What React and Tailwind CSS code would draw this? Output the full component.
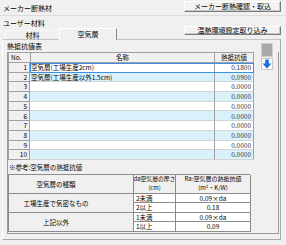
import React from 'react';

const ROWS = [
  { no: 1, name: '空気層(工場生産2cm)', value: '0.1800' },
  { no: 2, name: '空気層(工場生産以外1.5cm)', value: '0.0900' },
  ...Array.from({ length: 8 }, (_, i) => ({ no: i + 3, name: '', value: '0.0000' })),
];

const REF = [
  { kind: '工場生産で気密なもの', rows: [['2未満', '0.09×da'], ['2以上', '0.18']] },
  { kind: '上記以外', rows: [['1未満', '0.09×da'], ['1以上', '0.09']] },
];

function WinButton({ children, className }) {
  return (
    <div
      className={
        'flex items-center justify-center bg-[#f3f3f3] border border-t-white border-l-white border-r-[#7a7a7a] border-b-[#7a7a7a] shadow-[inset_-1px_-1px_0_#c8c8c8] whitespace-nowrap ' +
        className
      }
    >
      {children}
    </div>
  );
}

function MainTable() {
  return (
    <div className="w-[246px] border-l border-t border-[#a0a0a0] text-[6.5px]">
      {/* header */}
      <div className="flex h-[10px] bg-[#f0f0f0]">
        <div className="w-[22px] flex items-center pl-[2px] border-r border-b border-[#a0a0a0]">No.</div>
        <div className="w-[185px] flex items-center justify-center border-r border-b border-[#a0a0a0]">名称</div>
        <div className="w-[39px] flex items-center justify-center border-r border-b border-[#a0a0a0]">熱抵抗値</div>
      </div>
      {ROWS.map((r, i) => (
        <div key={r.no} className="flex h-[9.7px]">
          <div className="w-[22px] flex items-center justify-end pr-[2px] bg-[#f0f0f0] border-r border-b border-[#a0a0a0]">
            {r.no}
          </div>
          <div
            className={
              'flex ' +
              (i % 2 === 1 ? 'bg-[#d9f1fb] ' : 'bg-white ') +
              (i === 0 ? 'outline outline-1 outline-[#3d8ee6] -outline-offset-1 relative z-10' : '')
            }
          >
            <div className="w-[185px] flex items-center pl-[1px] border-r border-b border-r-[#a0a0a0] border-b-[#d4d4d4] whitespace-nowrap">
              {r.name}
            </div>
            <div className="w-[39px] flex items-center justify-end pr-[2px] text-[#333] border-r border-b border-r-[#a0a0a0] border-b-[#d4d4d4]">
              {r.value}
            </div>
          </div>
        </div>
      ))}
    </div>
  );
}

function RefTable() {
  return (
    <div className="w-[242px] grid grid-cols-[125px_42px_75px] grid-rows-[19px_repeat(4,9.5px)] border-l border-t border-[#8c8c8c] text-[6.5px]">
      <div className="flex items-center justify-center pr-[30px] bg-[#f0f0f0] border-r border-b border-[#8c8c8c]">空気層の種類</div>
      <div className="flex flex-col items-center justify-center bg-[#f0f0f0] border-r border-b border-[#8c8c8c] text-[5.8px] leading-[1.45] whitespace-nowrap">
        <span>da空気層の厚さ</span>
        <span>(cm)</span>
      </div>
      <div className="flex flex-col items-center justify-center bg-[#f0f0f0] border-r border-b border-[#8c8c8c] text-[6px] leading-[1.4] whitespace-nowrap">
        <span>Ra:空気層の熱抵抗値</span>
        <span>(m²・K/W)</span>
      </div>
      {REF.map((g) => (
        <React.Fragment key={g.kind}>
          <div className="row-span-2 flex items-center justify-center pr-[30px] bg-[#f0f0f0] border-r border-b border-[#8c8c8c]">
            {g.kind}
          </div>
          {g.rows.map(([d, v]) => (
            <React.Fragment key={d}>
              <div className="col-start-2 flex items-center pl-[2px] bg-white border-r border-b border-[#8c8c8c]">{d}</div>
              <div className="flex items-center justify-center bg-white border-r border-b border-[#8c8c8c]">{v}</div>
            </React.Fragment>
          ))}
        </React.Fragment>
      ))}
    </div>
  );
}

export default function App() {
  return (
    <div className="w-[286px] h-[245px] overflow-hidden bg-[#f0f0f0] text-black text-[7px] leading-none font-['Noto_Sans_CJK_JP',sans-serif]">
      {/* top bar */}
      <div className="flex items-start justify-between h-[16px] border-b border-[#dcdcdc]">
        <div className="pl-[3px] pt-[5px]">メーカー断熱材</div>
        <WinButton className="mt-[1px] mr-[5px] w-[97px] h-[11px]">メーカー断熱確認・取込</WinButton>
      </div>

      {/* user material + tabs */}
      <div className="flex h-[23px]">
        <div className="flex flex-col">
          <div className="h-[12px] pl-[3px] pt-[4px]">ユーザー材料</div>
          <div className="flex items-end h-[11px] pl-[5px]">
            <div className="w-[54px] h-[9px] flex items-center justify-center border-t border-l border-[#f8f8f8]">材料</div>
            <div className="relative z-10 -mb-px w-[58px] h-[12px] flex items-center justify-center bg-[#f0f0f0] border-t border-l border-r border-t-white border-l-white border-r-[#8a8a8a]">
              空気層
            </div>
          </div>
        </div>
        <WinButton className="ml-auto mt-[10px] mr-[5px] w-[97px] h-[9px]">温熱環境設定取り込み</WinButton>
      </div>

      {/* tab page */}
      <div className="ml-[2px] w-[279px] h-[201px] border border-t-[#c4c4c4] border-l-white border-r-[#a8a8a8] border-b-[#a8a8a8]">
        <div className="h-[12px] pl-[4px] pt-[3px]">熱抵抗値表</div>
        <div className="ml-[4px] w-[272px] h-[182px] border-l border-b border-r border-[#9a9a9a]">
          <div className="flex">
            <MainTable />
            <div className="ml-[7px] -mt-[9px] flex flex-col w-[12px]">
              <div className="h-[14px] bg-[#a9a9a9] border border-[#d0d0d0]" />
              <div className="mt-[1px] h-[12px] flex items-center justify-center bg-white border border-[#c8c8c8]">
                <svg width="10" height="10" viewBox="0 0 10 10">
                  <path d="M3.2 0.5h3.6v4h2.7L5 9.5 0.5 4.5h2.7z" fill="#1c6ee0" />
                </svg>
              </div>
            </div>
          </div>
          <div className="h-[14px] pl-[1px] pt-[4px] text-[6.5px]">※参考:空気層の熱抵抗値</div>
          <RefTable />
        </div>
      </div>
    </div>
  );
}
